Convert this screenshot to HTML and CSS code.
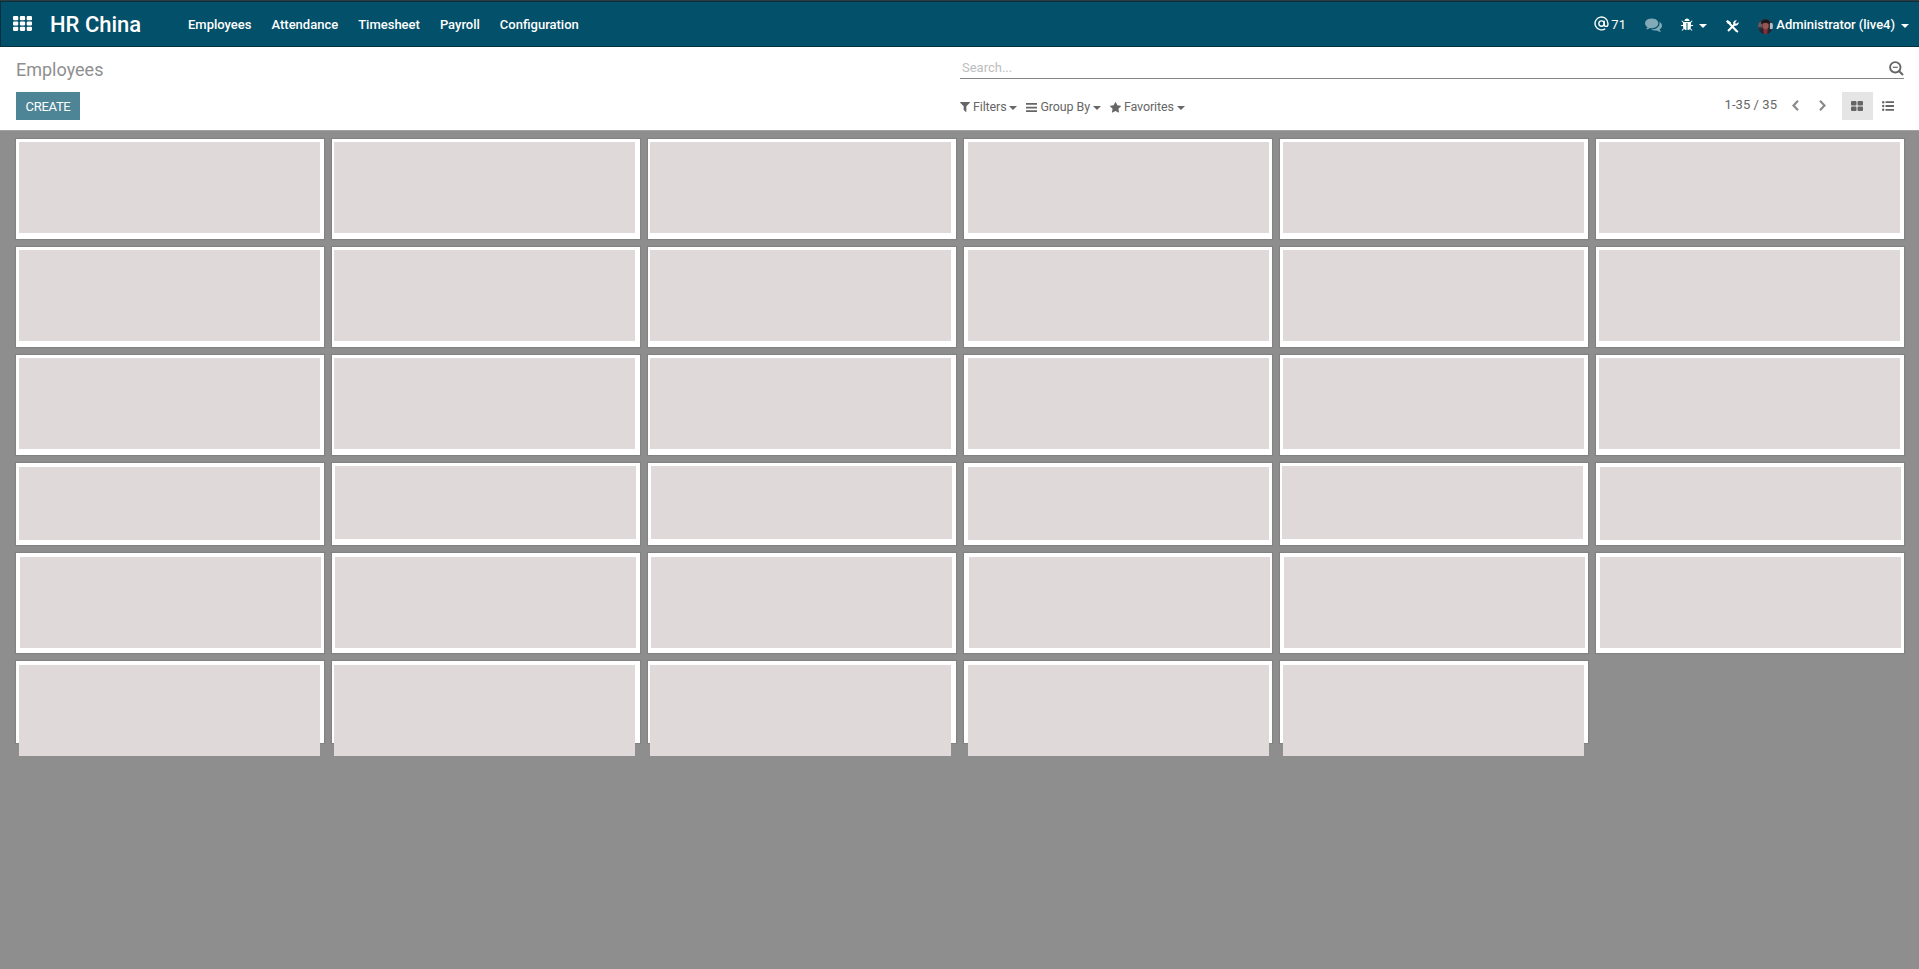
FILE: index.html
```
<!DOCTYPE html>
<html lang="en">
<head>
<meta charset="utf-8">
<title>Employees - HR China</title>
<link rel="stylesheet" href="styles.css">
</head>
<body>
<header class="navbar">
  <svg class="apps" viewBox="0 0 18 14"><path d="M0 1q0-1 1-1h3q1 0 1 1v2q0 1-1 1H1q-1 0-1-1zM6.500 1q0-1 1-1h3q1 0 1 1v2q0 1-1 1h-3q-1 0-1-1zM13 1q0-1 1-1h3q1 0 1 1v2q0 1-1 1h-3q-1 0-1-1zM0 6q0-1 1-1h3q1 0 1 1v2q0 1-1 1H1q-1 0-1-1zM6.500 6q0-1 1-1h3q1 0 1 1v2q0 1-1 1h-3q-1 0-1-1zM13 6q0-1 1-1h3q1 0 1 1v2q0 1-1 1h-3q-1 0-1-1zM0 11q0-1 1-1h3q1 0 1 1v2q0 1-1 1H1q-1 0-1-1zM6.500 11q0-1 1-1h3q1 0 1 1v2q0 1-1 1h-3q-1 0-1-1zM13 11q0-1 1-1h3q1 0 1 1v2q0 1-1 1h-3q-1 0-1-1z"/></svg>
  <span class="brand">HR China</span>
  <nav class="menu"><a>Employees</a><a>Attendance</a><a>Timesheet</a><a>Payroll</a><a>Configuration</a></nav>
  <div class="systray">
    <svg class="at" viewBox="0 0 24 24"><circle cx="12" cy="12" r="4.300"/><path d="M16.300 7.500v6a3 3 0 0 0 6 0V12a10.300 10.300 0 1 0-4.300 8.300"/></svg>
    <span class="count">71</span>
    <svg class="chat" viewBox="0 0 1792 1792"><path d="M1408 768q0 139-94 257t-256.500 186.500-353.500 68.500q-86 0-176-16-124 88-278 128-36 9-86 16h-3q-11 0-20.500-8t-11.500-21q-1-3-1-6.500t.5-6.500 2-6l2.500-5 3.500-5.500 4-5 4.500-5 4-4.500q5-6 23-25t26-29.500 22.500-29 25-38.500 20.500-44q-124-72-195-177t-71-224q0-139 94-257t256.500-186.500 353.500-68.500 353.500 68.500 256.500 186.500 94 257zm384 256q0 120-71 224.500t-195 176.500q10 24 20.500 44t25 38.500 22.500 29 26 29.500 23 25q1 1 4 4.500t4.500 5 4 5 3.500 5.500l2.500 5 2 6 .5 6.500-1 6.500q-3 14-13 22t-22 7q-50-7-86-16-154-40-278-128-90 16-176 16-271 0-472-132 58 4 88 4 161 0 309-45t264-129q125-92 192-212t67-254q0-77-23-152 129 71 204 178t75 230z"/></svg>
    <svg class="bug" viewBox="0 0 1792 1792"><path d="M1696 960q0 26-19 45t-45 19h-224q0 171-67 290l208 209q19 19 19 45t-19 45q-18 19-45 19t-45-19l-198-197q-5 5-15 13t-42 28.500-65 36.500-82 29-97 13v-896h-128v896q-51 0-101.500-13.500t-87-33-66-39-43.500-32.500l-15-14-183 207q-20 21-48 21-24 0-43-16-19-18-20.500-44.500t15.500-46.500l202-227q-58-114-58-274h-224q-26 0-45-19t-19-45 19-45 45-19h224v-294l-173-173q-19-19-19-45t19-45 45-19 45 19l173 173h844l173-173q19-19 45-19t45 19 19 45-19 45l-173 173v294h224q26 0 45 19t19 45zm-480-576h-640q0-133 93.500-226.500t226.500-93.500 226.500 93.500 93.500 226.500z"/></svg>
    <i class="caret"></i>
    <svg class="tools" viewBox="0 0 13 13"><path d="M3.500 3.500l7.500 8M9 4L2 11"/><path class="solid" d="M0 1.500L1.500 0l3.300 2.200v1.300l-1.300.8L2 4zM8.800 8.200l3.700 3.200-1.200 1.400-3.500-3.500zM7.300 4.600Q6.700 2 8.400.8 9.500 0 10.900.4L9.300 2v1.500h1.600l1.700-1.600q.4 1.700-.8 2.800-1.300 1.200-3.200.9z"/></svg>
    <svg class="avatar" viewBox="0 0 15 15"><defs><clipPath id="round"><circle cx="7.500" cy="7.500" r="7.500"/></clipPath></defs><g clip-path="url(#round)"><path fill="#39343f" d="M0 0h15v15H0z"/><path fill="#b5bcc3" d="M12 4h3v6h-3z"/><path fill="#665b62" d="M0 3h4v5H0z"/><ellipse cx="7.500" cy="6.500" rx="3" ry="4" fill="#9a5550"/><path fill="#17191f" d="M3 5q0-4.500 4.500-4.500T12 5L7.500 3.800z"/><path fill="#882f3b" d="M5 9.500L7.500 11 10 9.500V15H5z"/><path fill="#222832" d="M1 11l4-2 1 6H1zM10 9l4 3-2 3h-3z"/></g></svg>
    <span class="user">Administrator (live4)</span>
    <i class="caret"></i>
  </div>
</header>

<section class="panel">
  <div class="left">
    <h1 class="title">Employees</h1>
    <button class="create">CREATE</button>
  </div>
  <div class="right">
    <div class="search">
      <span class="hint">Search...</span>
      <svg class="zoom-out" viewBox="0 0 15 15"><circle cx="6.300" cy="6.300" r="5.200"/><path d="M10 10l4 4"/><path class="thin" d="M3.800 6.300h5"/></svg>
    </div>
    <div class="tools-row">
      <div class="filters">
        <span class="filter"><svg class="funnel" viewBox="190 250 1412 1420"><path d="M1595 295q17 41-14 70l-493 493v742q0 42-39 59-13 5-25 5-27 0-45-19l-256-256q-19-19-19-45v-486l-493-493q-31-29-14-70 17-39 59-39h1280q42 0 59 39z"/></svg><span class="label">Filters</span><i class="caret"></i></span>
        <span class="filter"><svg class="bars" viewBox="0 0 11 9"><path d="M0 0h11v1.700H0zM0 3.700h11v1.700H0zM0 7.300h11V9H0z"/></svg><span class="label">Group By</span><i class="caret"></i></span>
        <span class="filter"><svg class="star" viewBox="64 60 1664 1600"><path d="M1728 647q0 22-26 48l-363 354 86 500q1 7 1 20 0 21-10.500 35.500t-30.500 14.500q-19 0-40-12l-449-236-449 236q-22 12-40 12-21 0-31.500-14.500t-10.500-35.500q0-6 2-20l86-500-364-354q-25-27-25-48 0-37 56-46l502-73 225-455q19-41 49-41t49 41l225 455 502 73q56 9 56 46z"/></svg><span class="label">Favorites</span><i class="caret"></i></span>
      </div>
      <div class="pager">
        <span class="range">1-35 / 35</span>
        <svg class="chev prev" viewBox="0 0 7 11"><path d="M6 .8L1.500 5.500 6 10.200"/></svg>
        <svg class="chev next" viewBox="0 0 7 11"><path d="M1 .8l4.500 4.700L1 10.200"/></svg>
        <span class="view active"><svg class="kanban-icon" viewBox="0 0 12 10"><path d="M1 0h3.500q1 0 1 1v2.500q0 1-1 1H1q-1 0-1-1V1q0-1 1-1zM7.500 0H11q1 0 1 1v2.500q0 1-1 1H7.500q-1 0-1-1V1q0-1 1-1zM1 5.500h3.500q1 0 1 1V9q0 1-1 1H1q-1 0-1-1V6.500q0-1 1-1zM7.500 5.500H11q1 0 1 1V9q0 1-1 1H7.500q-1 0-1-1V6.500q0-1 1-1z"/></svg></span>
        <span class="view"><svg class="list-icon" viewBox="0 0 12 10"><path d="M3.500.3H12V2.100H3.500zM3.500 4.100H12v1.800H3.500zM3.500 7.900H12v1.800H3.500z"/><circle cx="1.200" cy="1.200" r="1.200"/><circle cx="1.200" cy="5" r="1.200"/><circle cx="1.200" cy="8.800" r="1.200"/></svg></span>
      </div>
    </div>
  </div>
</section>

<main class="kanban">
  <div class="card"><div class="body x3"></div></div><div class="card"><div class="body x2"></div></div><div class="card"><div class="body x2"></div></div><div class="card"><div class="body x4"></div></div><div class="card"><div class="body x3"></div></div><div class="card"><div class="body x3"></div></div>
  <div class="card"><div class="body x3"></div></div><div class="card"><div class="body x2"></div></div><div class="card"><div class="body x2"></div></div><div class="card"><div class="body x4"></div></div><div class="card"><div class="body x3"></div></div><div class="card"><div class="body x3"></div></div>
  <div class="card"><div class="body x3"></div></div><div class="card"><div class="body x2"></div></div><div class="card"><div class="body x2"></div></div><div class="card"><div class="body x4"></div></div><div class="card"><div class="body x3"></div></div><div class="card"><div class="body x3"></div></div>
  <div class="card"><div class="body short x3 y4"></div></div><div class="card"><div class="body short x3"></div></div><div class="card"><div class="body short x3"></div></div><div class="card"><div class="body short x4 y4"></div></div><div class="card"><div class="body short x2"></div></div><div class="card"><div class="body short x4 y4"></div></div>
  <div class="card"><div class="body x4 y4"></div></div><div class="card"><div class="body x3 y4"></div></div><div class="card"><div class="body x3 y4"></div></div><div class="card"><div class="body x5 y4"></div></div><div class="card"><div class="body x4 y4"></div></div><div class="card"><div class="body x4 y4"></div></div>
  <div class="card"><div class="body x3 y4"></div></div><div class="card"><div class="body x2 y4"></div></div><div class="card"><div class="body x2 y4"></div></div><div class="card"><div class="body x4 y4"></div></div><div class="card"><div class="body x3 y4"></div></div>
</main>
</body>
</html>
```
FILE: styles.css
```
* { box-sizing: border-box; }
body {
  margin: 0;
  height: 969px;
  overflow: hidden;
  display: flex;
  flex-direction: column;
  background: #8e8e8e;
  font-family: Roboto, "Liberation Sans", sans-serif;
  font-size: 13px;
  color: #666;
}
svg { display: block; flex: none; fill: currentColor; }
.caret {
  flex: none;
  border: 4px solid transparent;
  border-top-color: currentColor;
  border-bottom: 0;
}

.navbar {
  flex: none;
  height: 47px;
  display: flex;
  align-items: center;
  padding: 2px 10px 0 13px;
  background: #02506a;
  border-top: 1px solid #303b40;
  border-bottom: 1px solid #06303e;
  box-shadow: inset 0 1px #06303e, inset 1px 0 #06303e;
  color: #fff;
  font-weight: 500;
}
.apps { width: 19px; height: 15px; margin-top: -3px; }
.brand { width: 138px; margin-left: 18px; font-size: 22px; line-height: 28px; white-space: nowrap; }
.menu { display: flex; gap: 20px; line-height: 18px; }
.systray { margin-left: auto; display: flex; align-items: center; line-height: 18px; }
.systray .caret { margin-top: 2px; }
.at { width: 15px; height: 15px; margin-top: -2px; fill: none; stroke: currentColor; stroke-width: 2.200; }
.count { width: 14px; margin-left: 2px; font-weight: 400; }
.chat { width: 17px; height: 17px; margin-left: 20px; color: #82a9b7; }
.bug { width: 14px; height: 14px; margin-left: 18px; margin-right: 5px; }
.tools { width: 13px; height: 13px; margin: 4px 0 0 19px; fill: none; stroke: currentColor; stroke-width: 2; }
.tools .solid { fill: currentColor; stroke: none; }
.avatar { width: 15px; height: 15px; margin-left: 19px; margin-top: 3px; }
.user { margin: 0 6px 0 3px; white-space: nowrap; letter-spacing: -.03px; }

.panel {
  flex: none;
  height: 83px;
  display: flex;
  padding: 0 15px 0 16px;
  background: #fff;
}
.left { width: 944px; display: flex; flex-direction: column; align-items: flex-start; }
.title { margin: 11px 0 10px; font-size: 18px; line-height: 24px; font-weight: 400; color: #8f8f8f; }
.create {
  width: 64px;
  height: 28px;
  padding: 2px 0 0;
  border: 0;
  background: #4d8496;
  color: #fff;
  font: 400 13px/18px Roboto, sans-serif;
  letter-spacing: -.3px;
}
.right { flex: 1; }
.search {
  height: 32px;
  display: flex;
  align-items: flex-start;
  justify-content: space-between;
  padding-top: 12px;
  padding-left: 2px;
  border-bottom: 1px solid #858585;
}
.hint { line-height: 18px; color: #bdbdbd; }
.zoom-out { width: 15px; height: 15px; margin-top: 2px; fill: none; stroke: #666; stroke-width: 1.900; }
.zoom-out .thin { stroke-width: 1.200; }
.tools-row { display: flex; justify-content: space-between; padding-top: 13px; }
.filters { display: flex; gap: 9px; height: 28px; padding-top: 2px; align-items: center; }
.filter { display: flex; align-items: center; gap: 3px; }
.filter .caret { margin-top: 2px; }
.label { font-size: 12.500px; line-height: 18px; white-space: nowrap; letter-spacing: -.13px; }
.funnel { width: 10px; height: 10px; }
.bars { width: 11px; height: 9px; }
.star { width: 11px; height: 11px; }
.pager { display: flex; height: 28px; align-items: center; }
.range { margin-right: 15px; margin-top: -3px; white-space: nowrap; letter-spacing: .05px; }
.chev { width: 7px; height: 11px; margin-top: -1px; fill: none; stroke: #8a8a8a; stroke-width: 2.200; }
.chev.next { margin: -1px 16px 0 20px; }
.view { width: 31px; height: 28px; padding: 0 1px 1px 0; display: flex; align-items: center; justify-content: center; }
.view.active { background: #e5e5e5; }
.kanban-icon { width: 12px; height: 10px; }
.list-icon { width: 12px; height: 10px; }

.kanban {
  flex: 1;
  display: grid;
  grid-template-columns: repeat(6, 308px);
  grid-template-rows: 100px 100px 100px 82px 100px 82px;
  gap: 8px;
  padding: 8px 15px 0 16px;
  border-top: 1px solid #a0a0a0;
}
.card { background: #fff; box-shadow: 0 0 1px 1px #828282; padding-top: 1px; }
.body { width: 301px; height: 91px; margin-top: 2px; background: #dfd9d9; }
.short { height: 73px; }
.x2 { margin-left: 2px; }
.x3 { margin-left: 3px; }
.x4 { margin-left: 4px; }
.x5 { margin-left: 5px; }
.y4 { margin-top: 3px; }
```
